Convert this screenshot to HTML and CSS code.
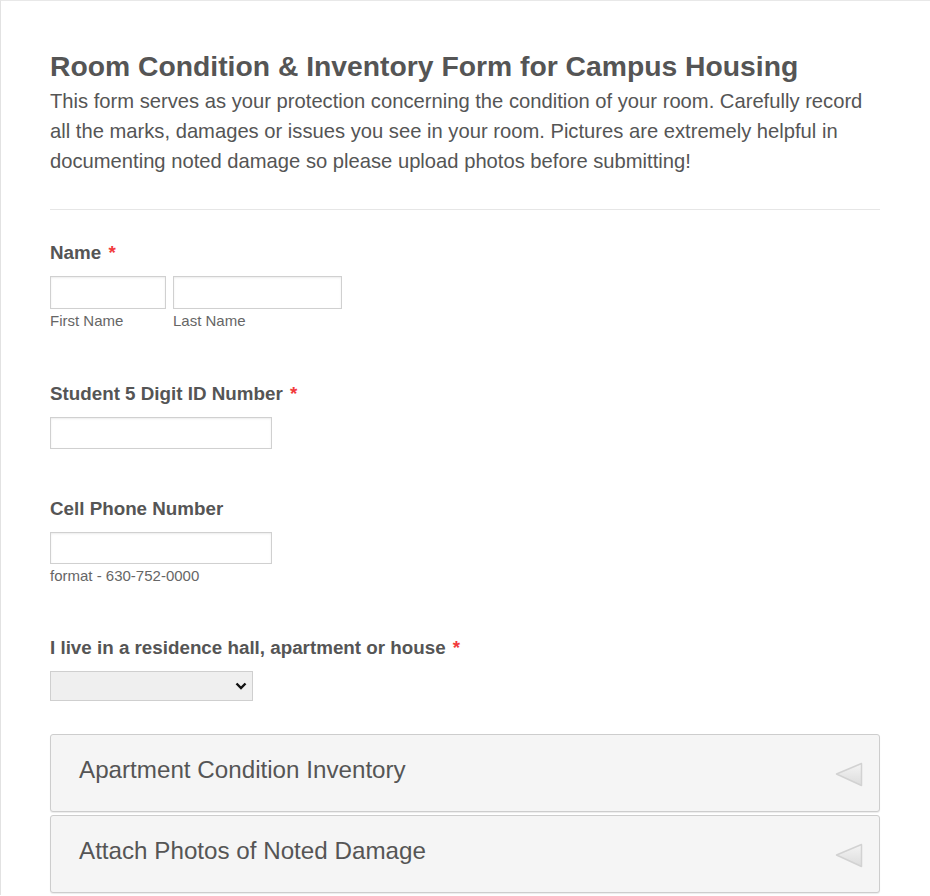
FILE: index.html
```html
<!DOCTYPE html>
<html>
<head>
<meta charset="utf-8">
<link rel="stylesheet" href="styles.css">
</head>
<body>
<div class="page">
  <h1 class="title">Room Condition &amp; Inventory Form for Campus Housing</h1>
  <p class="desc">This form serves as your protection concerning the condition of your room. Carefully record all the marks, damages or issues you see in your room. Pictures are extremely helpful in documenting noted damage so please upload photos before submitting!</p>
  <div class="divider"></div>

  <div class="field field-first">
    <div class="label">Name <span class="req">*</span></div>
    <div class="name-row">
      <div class="name-col">
        <input class="input in-first" type="text">
        <div class="sub">First Name</div>
      </div>
      <div class="name-col">
        <input class="input in-last" type="text">
        <div class="sub">Last Name</div>
      </div>
    </div>
  </div>

  <div class="field">
    <div class="label">Student 5 Digit ID Number <span class="req">*</span></div>
    <input class="input in-mid" type="text">
  </div>

  <div class="field field-cell">
    <div class="label">Cell Phone Number</div>
    <input class="input in-mid" type="text">
    <div class="sub">format - 630-752-0000</div>
  </div>

  <div class="field field-live">
    <div class="label">I live in a residence hall, apartment or house <span class="req">*</span></div>
    <div class="select">
      <svg class="chev" width="12" height="8" viewBox="0 0 12 8"><path d="M1.5 1.5 L6 6 L10.5 1.5" fill="none" stroke="#111" stroke-width="2.4"/></svg>
    </div>
  </div>

  <div class="panels">
    <div class="panel">
      <span class="panel-title">Apartment Condition Inventory</span>
      <svg class="tri" width="28" height="25" viewBox="0 0 28 25"><defs><linearGradient id="g1" x1="0" y1="0" x2="0" y2="1"><stop offset="0" stop-color="#f4f4f4"/><stop offset="1" stop-color="#dcdcdc"/></linearGradient></defs><polygon points="1.5,12 26.5,1.5 26.5,23.5" fill="url(#g1)" stroke="#d2d2d2" stroke-width="1.5" stroke-linejoin="round"/></svg>
    </div>
    <div class="panel">
      <span class="panel-title">Attach Photos of Noted Damage</span>
      <svg class="tri" width="28" height="25" viewBox="0 0 28 25"><defs><linearGradient id="g2" x1="0" y1="0" x2="0" y2="1"><stop offset="0" stop-color="#f4f4f4"/><stop offset="1" stop-color="#dcdcdc"/></linearGradient></defs><polygon points="1.5,12 26.5,1.5 26.5,23.5" fill="url(#g2)" stroke="#d2d2d2" stroke-width="1.5" stroke-linejoin="round"/></svg>
    </div>
  </div>
</div>
</body>
</html>
```

FILE: styles.css
```css
html, body {
  margin: 0;
  padding: 0;
  background: #fff;
}
body {
  font-family: "Liberation Sans", Arial, sans-serif;
  color: #555;
}
.page {
  border-top: 1px solid #e8e8e8;
  border-left: 1px solid #e2e2e2;
  padding: 48px 50px 0 49px;
  min-height: 895px;
  box-sizing: border-box;
}
.title {
  margin: 0;
  font-size: 28.3px;
  line-height: 35px;
  font-weight: bold;
  color: #555;
}
.desc {
  margin: 2px 0 0 0;
  font-size: 20.2px;
  line-height: 30px;
  color: #555;
}
.divider {
  margin-top: 33px;
  border-top: 1px solid #e6e6e6;
}
.field {
  margin-top: 54px;
}
.field-first {
  margin-top: 32px;
}
.field-cell {
  margin-top: 49px;
}
.field-live {
  margin-top: 53px;
}
.label {
  font-size: 18.8px;
  line-height: 22px;
  font-weight: bold;
  color: #555;
  margin-bottom: 12px;
}
.req {
  color: #f23a3c;
  margin-left: 2px;
}
.name-row {
  display: flex;
  gap: 7px;
}
.name-col {
  display: flex;
  flex-direction: column;
}
.input {
  display: block;
  box-sizing: border-box;
  height: 32px;
  margin: 0;
  padding: 0;
  border: 1px solid #d0d0d0;
  box-shadow: inset 0 1px 2px rgba(0,0,0,0.08);
  background: #fff;
  font-family: "Liberation Sans", Arial, sans-serif;
}
.in-first { width: 116px; height: 33px; }
.in-last { width: 169px; height: 33px; }
.in-mid { width: 222px; }
.sub {
  margin-top: 3px;
  font-size: 15px;
  line-height: 17px;
  color: #666;
}
.select {
  box-sizing: border-box;
  width: 203px;
  height: 30px;
  border: 1px solid #cfcfcf;
  background: #efefef;
  display: flex;
  align-items: center;
  justify-content: flex-end;
  padding-right: 5px;
}
.panels {
  margin-top: 33px;
  display: flex;
  flex-direction: column;
  gap: 3px;
}
.panel {
  box-sizing: border-box;
  height: 78px;
  border: 1px solid #cdcdcd;
  border-radius: 3px;
  background: #f5f5f5;
  box-shadow: 0 1px 1px rgba(0,0,0,0.08);
  display: flex;
  align-items: center;
  justify-content: space-between;
  padding: 0 16px 0 28px;
}
.panel-title {
  font-size: 24.2px;
  color: #555;
  margin-top: -7px;
}
.tri {
  margin-top: 3px;
}
```
